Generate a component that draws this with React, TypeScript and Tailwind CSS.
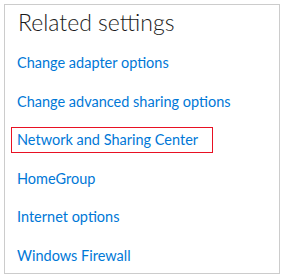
import React from 'react';

const links = [
  'Change adapter options',
  'Change advanced sharing options',
  'Network and Sharing Center',
  'HomeGroup',
  'Internet options',
  'Windows Firewall',
];

export default function App() {
  return (
    <div className="w-[284px] h-[275px] bg-white p-1 font-['Lato',sans-serif]">
      <div className="h-[270px] w-[276px] border border-[#cccccc] pl-3">
        {/* Header */}
        <h2 className="pl-[1px] pt-[3px] text-[23px] font-light leading-[28px] text-[#1a1a1a]">Related settings</h2>

        {/* Links */}
        <div className="mt-[17px] flex flex-col gap-[18.5px]">
          {links.map((link) =>
            link === 'Network and Sharing Center' ? (
              <div key={link} className="-ml-[6px] flex h-5 items-center">
                <span className="-my-[3px] border border-[#e81123] py-[2px] pl-[5px] pr-[14px] text-[14.5px] leading-5 text-[#0078d7]">
                  {link}
                </span>
              </div>
            ) : (
              <a key={link} className="h-5 text-[14.5px] leading-5 text-[#0078d7]">
                {link}
              </a>
            )
          )}
        </div>
      </div>
    </div>
  );
}
